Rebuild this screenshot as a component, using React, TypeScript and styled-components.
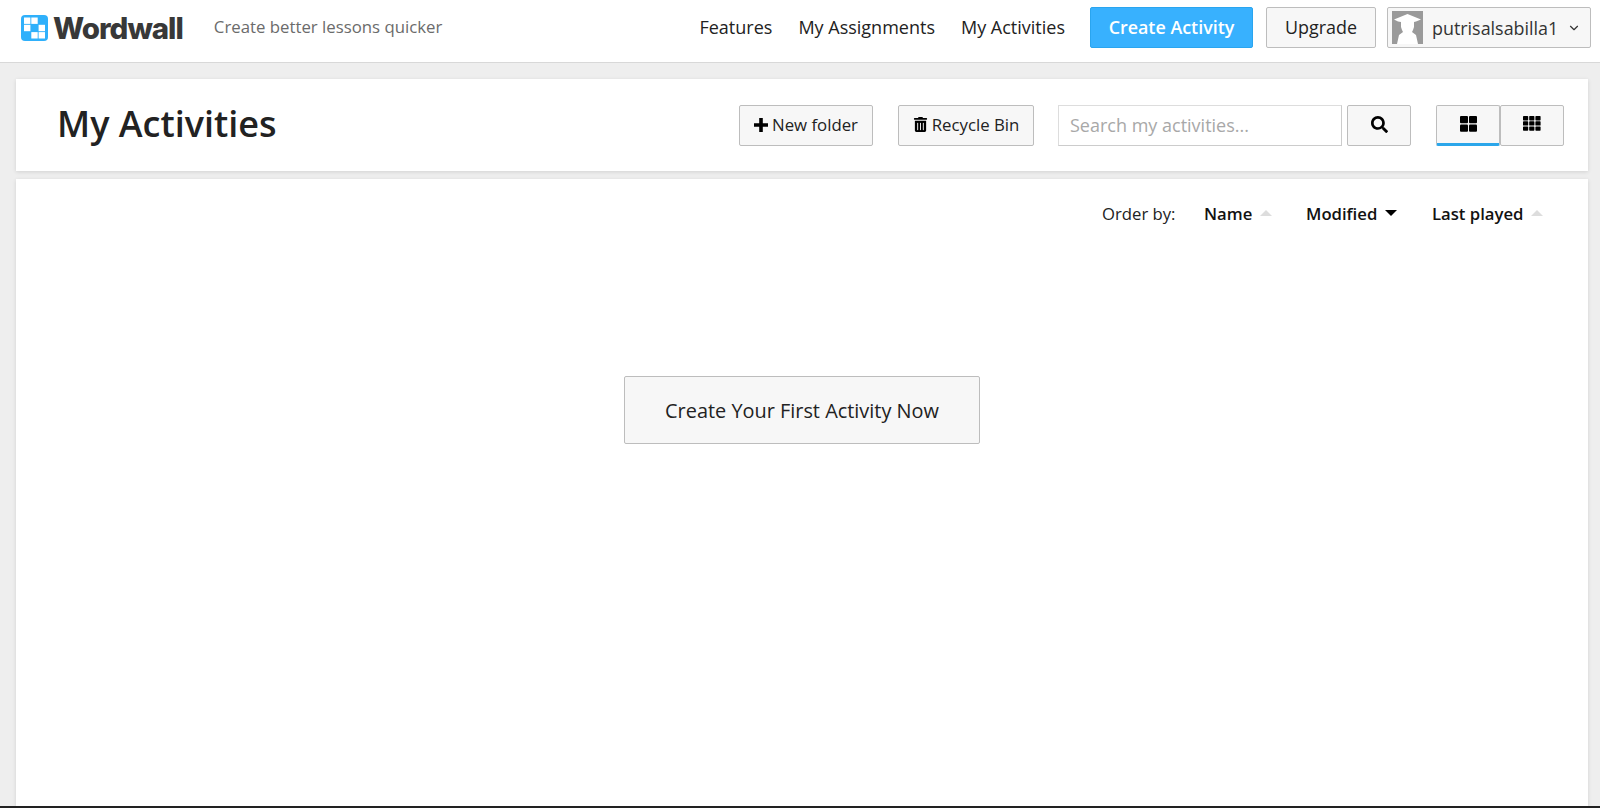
import styled, { createGlobalStyle } from "styled-components";
import { FaTrashAlt, FaSearch } from "react-icons/fa";
import { LuChevronDown } from "react-icons/lu";

const Global = createGlobalStyle`
  html, body {
    margin: 0;
    padding: 0;
    background: #eeeeee;
  }
  * {
    box-sizing: border-box;
  }
  body {
    font-family: "Open Sans", "Liberation Sans", sans-serif;
    color: #222;
  }
`;

const Page = styled.div`
  width: 1600px;
  height: 808px;
  overflow: hidden;
  display: flex;
  flex-direction: column;
  border-bottom: 2px solid #222;
`;

const Header = styled.header`
  height: 63px;
  flex: none;
  display: flex;
  align-items: flex-start;
  background: #fff;
  border-bottom: 1px solid #d8d8d8;
  padding: 7px 9px 0 21px;
`;

const Logo = styled.div`
  display: flex;
  align-items: center;
  gap: 5px;
  height: 41px;
`;

const Wordmark = styled.span`
  font-family: Inter, "Liberation Sans", sans-serif;
  font-size: 29.5px;
  font-weight: 800;
  letter-spacing: -1px;
  color: #383838;
`;

const Tagline = styled.span`
  font-size: 16.8px;
  color: #6b6b6b;
  margin-left: 31px;
  line-height: 39px;
`;

const Nav = styled.nav`
  margin-left: auto;
  display: flex;
  align-items: center;
  height: 41px;
  padding-bottom: 1px;
  gap: 26px;
  margin-right: 25px;
`;

const NavLink = styled.a`
  font-size: 18px;
  color: #222;
`;

const HeaderButton = styled.button<{ $primary?: boolean }>`
  height: 41px;
  padding: 0 0 2px;
  width: ${({ $primary }) => ($primary ? "163px" : "110px")};
  margin-right: ${({ $primary }) => ($primary ? "13px" : "11px")};
  border-radius: 2px;
  border: 1px solid ${({ $primary }) => ($primary ? "#2aa5ef" : "#bdbdbd")};
  background: ${({ $primary }) => ($primary ? "#38b1fe" : "#f7f7f7")};
  color: ${({ $primary }) => ($primary ? "#fff" : "#222")};
  font-family: inherit;
  font-size: 17.9px;
  font-weight: ${({ $primary }) => ($primary ? 600 : 400)};
`;

const UserMenu = styled.div`
  width: 204px;
  height: 41px;
  display: flex;
  align-items: center;
  padding: 0 9px 0 4px;
  border: 1px solid #bdbdbd;
  border-radius: 2px;
  background: #f7f7f7;
  font-size: 17.9px;
  color: #333;
`;

const UserName = styled.span`
  margin-left: 9px;
  flex: 1;
`;

const Panel = styled.section`
  margin: 0 12px 0 16px;
  background: #fff;
  box-shadow: 0 1px 4px rgba(0, 0, 0, 0.12);
`;

const TitleBar = styled(Panel)`
  margin-top: 16px;
  height: 92px;
  flex: none;
  display: flex;
  align-items: flex-start;
  padding: 26px 24px 0 41px;
`;

const Title = styled.h1`
  margin: 0;
  font-size: 36px;
  line-height: 38px;
  font-weight: 600;
  color: #222;
  margin-right: auto;
`;

const ToolButton = styled.button`
  height: 41px;
  padding: 0 0 2px;
  display: flex;
  align-items: center;
  justify-content: center;
  gap: 4px;
  border: 1px solid #bdbdbd;
  border-radius: 2px;
  background: #f7f7f7;
  font-family: inherit;
  font-size: 16.8px;
  color: #222;
  svg {
    color: #000;
  }
`;

const FolderButton = styled(ToolButton)`
  width: 134px;
  margin-right: 25px;
`;

const BinButton = styled(ToolButton)`
  width: 136px;
  margin-right: 24px;
`;

const SearchInput = styled.input`
  width: 284px;
  height: 41px;
  padding: 0 10px 2px 11px;
  border: 1px solid #ccc;
  border-left-color: #ddd;
  border-top-color: #ddd;
  background: #fff;
  font-family: inherit;
  font-size: 18px;
  &::placeholder {
    color: #a8a8a8;
    opacity: 1;
  }
`;

const SearchButton = styled(ToolButton)`
  width: 64px;
  margin-left: 5px;
  margin-right: 25px;
`;

const ViewButton = styled(ToolButton)<{ $active?: boolean }>`
  width: 64px;
  border-bottom: ${({ $active }) =>
    $active ? "3px solid #2ba6ea" : "1px solid #bdbdbd"};
  padding-bottom: ${({ $active }) => ($active ? "2px" : "4px")};
`;

const Content = styled(Panel)`
  margin-top: 8px;
  flex: 1;
  display: flex;
  flex-direction: column;
`;

const OrderBar = styled.div`
  display: flex;
  align-items: center;
  height: 22px;
  margin-top: 23px;
  padding-left: 1086px;
  font-size: 16.7px;
`;

const OrderLabel = styled.span`
  color: #222;
  width: 102px;
`;

const OrderItem = styled.span<{ $width: number }>`
  width: ${({ $width }) => $width}px;
  display: flex;
  align-items: center;
  gap: 8px;
  font-weight: 600;
  color: #111;
`;

const Arrow = styled.i<{ $down?: boolean }>`
  width: 0;
  height: 0;
  border-left: 6px solid transparent;
  border-right: 6px solid transparent;
  border-top: ${({ $down }) => ($down ? "6px solid #000" : "none")};
  border-bottom: ${({ $down }) => ($down ? "none" : "6px solid #ddd")};
`;

const Center = styled.div`
  display: flex;
  justify-content: center;
  margin-top: 152px;
`;

const FirstButton = styled.button`
  width: 356px;
  height: 68px;
  border: 1px solid #bdbdbd;
  border-radius: 2px;
  background: #f7f7f7;
  font-family: inherit;
  font-size: 19.9px;
  color: #222;
`;

const logoCells = [
  [0, 0],
  [0, 1],
  [1, 0],
  [1, 2],
  [2, 1],
  [2, 2],
];

function LogoMark() {
  return (
    <svg width="27" height="26" viewBox="0 0 27 26">
      <rect width="27" height="26" rx="4" fill="#2fb0fb" />
      {logoCells.map(([r, c]) => (
        <rect key={`${r}-${c}`} x={3 + c * 7.3} y={2.5 + r * 7.3} width="6.4" height="6.4" fill="#fff" />
      ))}
    </svg>
  );
}

function Avatar() {
  return (
    <svg width="31" height="33" viewBox="0 0 31 33">
      <rect width="31" height="33" fill="#9a9a9a" />
      <path
        d="M15.5 3 L29 8.5 L24 10.5 L22 11 L22 16 L21 19 L20 21 L24 24 L26 33 L5 33 L7 24 L11 21 L10 19 L9 16 L9 11 L6 10.5 L2 8.5 Z"
        fill="#fff"
      />
    </svg>
  );
}

function PlusIcon() {
  return (
    <svg width="14" height="14" viewBox="0 0 14 14">
      <path d="M7 0 V14 M0 7 H14" stroke="#000" strokeWidth="3.6" />
    </svg>
  );
}

function LargeGrid() {
  return (
    <svg width="17" height="16" viewBox="0 0 17 16" fill="#000">
      <rect x="0" y="0" width="8" height="7.3" rx="1" />
      <rect x="9" y="0" width="8" height="7.3" rx="1" />
      <rect x="0" y="8.5" width="8" height="7.3" rx="1" />
      <rect x="9" y="8.5" width="8" height="7.3" rx="1" />
    </svg>
  );
}

function SmallGrid() {
  const cells = [0, 1, 2].flatMap((r) => [0, 1, 2].map((c) => [r, c]));
  return (
    <svg width="18" height="15" viewBox="0 0 18 15" fill="#000">
      {cells.map(([r, c]) => (
        <rect key={`${r}-${c}`} x={c * 6.2} y={r * 5.2} width="5.2" height="4.4" rx="0.7" />
      ))}
    </svg>
  );
}

export default function App() {
  return (
    <>
      <Global />
      <Page>
        <Header>
          <Logo>
            <LogoMark />
            <Wordmark>Wordwall</Wordmark>
          </Logo>
          <Tagline>Create better lessons quicker</Tagline>
          <Nav>
            <NavLink>Features</NavLink>
            <NavLink>My Assignments</NavLink>
            <NavLink>My Activities</NavLink>
          </Nav>
          <HeaderButton $primary>Create Activity</HeaderButton>
          <HeaderButton>Upgrade</HeaderButton>
          <UserMenu>
            <Avatar />
            <UserName>putrisalsabilla1</UserName>
            <LuChevronDown size={14} />
          </UserMenu>
        </Header>

        <TitleBar>
          <Title>My Activities</Title>
          <FolderButton>
            <PlusIcon />
            New folder
          </FolderButton>
          <BinButton>
            <FaTrashAlt size={15} />
            Recycle Bin
          </BinButton>
          <SearchInput placeholder="Search my activities..." />
          <SearchButton>
            <FaSearch size={17} />
          </SearchButton>
          <ViewButton $active>
            <LargeGrid />
          </ViewButton>
          <ViewButton>
            <SmallGrid />
          </ViewButton>
        </TitleBar>

        <Content>
          <OrderBar>
            <OrderLabel>Order by:</OrderLabel>
            <OrderItem $width={102}>
              Name <Arrow />
            </OrderItem>
            <OrderItem $width={126}>
              Modified <Arrow $down />
            </OrderItem>
            <OrderItem $width={120}>
              Last played <Arrow />
            </OrderItem>
          </OrderBar>
          <Center>
            <FirstButton>Create Your First Activity Now</FirstButton>
          </Center>
        </Content>
      </Page>
    </>
  );
}
